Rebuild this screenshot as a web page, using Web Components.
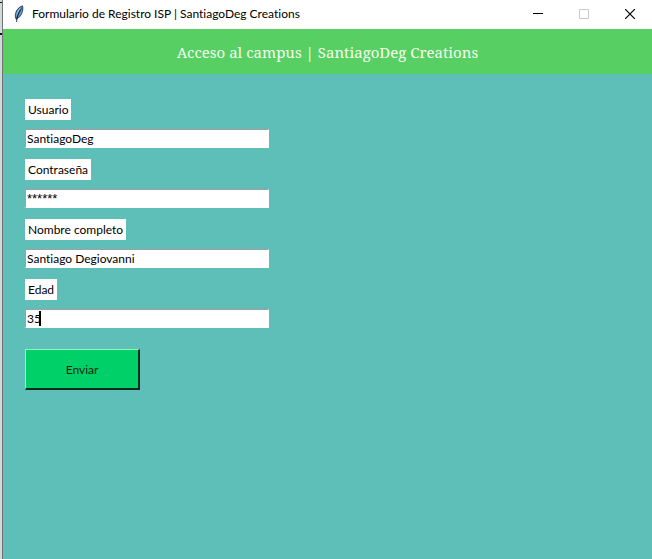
<!DOCTYPE html>
<html lang="es">
<head>
<meta charset="utf-8">
<meta name="viewport" content="width=device-width, initial-scale=1">
<title>Formulario de Registro ISP | SantiagoDeg Creations</title>
<style>
html,body{margin:0;height:100%}
body{font:12px/17px Lato,"Noto Sans",sans-serif;font-variant-ligatures:none;color:#000;overflow:hidden}
</style>
</head>
<body>
<app-window>
  <title-bar slot="title">Formulario de Registro ISP | SantiagoDeg Creations</title-bar>
  <page-banner>Acceso al campus | SantiagoDeg Creations</page-banner>
  <entry-form>
    <form-field label="Usuario" value="SantiagoDeg"></form-field>
    <form-field label="Contraseña" value="******" masked></form-field>
    <form-field label="Nombre completo" value="Santiago Degiovanni"></form-field>
    <form-field label="Edad" value="35" caret></form-field>
    <submit-button slot="action">Enviar</submit-button>
  </entry-form>
</app-window>
<script>
function define(name, html, setup) {
  const template = document.createElement('template');
  template.innerHTML = html;
  customElements.define(name, class extends HTMLElement {
    constructor() {
      super();
      this.attachShadow({mode: 'open'}).append(template.content.cloneNode(true));
    }
    connectedCallback() { if (setup) setup(this, this.shadowRoot); }
  });
}

define('app-window', `<style>
:host{display:flex;min-height:100vh;background:#5ebfb9}
.edge{flex:none;box-sizing:border-box;width:3px;border-right:1px solid #6b7776;
  background:linear-gradient(#111,#111) 0 2px/2px 1px no-repeat,linear-gradient(#111,#111) 0 33px/2px 2px no-repeat,#d5d8d8}
main{flex:1;min-width:0;display:flex;flex-direction:column}
</style><div class="edge"></div><main><slot name="title"></slot><slot></slot></main>`);

define('title-bar', `<style>
:host{display:flex;align-items:center;height:29px;background:#fff;white-space:nowrap}
.feather{flex:none;width:14px;height:18px;margin:0 6px 2px 9px}
.text{flex:1;min-width:0;overflow:hidden;padding-bottom:2px}
button{flex:none;display:grid;place-items:center;width:46px;height:27px;margin:0;padding:0;border:0;background:none}
button svg{display:block}
.controls{display:flex;align-items:center;margin:0 -1px 2px 0}
</style>
<svg class="feather" viewBox="0 0 14 18" aria-hidden="true">
<path d="M10.5 .8C7.5 1.5 4.2 5 3.5 8.4c-.5 2.2-.3 4.3.8 6.1 2.8-1.7 5.2-4.4 6-7.4.7-2.3.8-4.5.2-6.3z" fill="#3f6f9b" stroke="#0c1722" stroke-width=".6"/>
<path d="M9.7 1.8C7.3 3 5 6 4.5 8.2c-.3 1.3-.3 2.8 0 3.8C5.8 8 7.6 5 9.7 1.8z" fill="#8fbdea"/>
<path d="M10 4C8.6 6.5 7 8.8 6 12 8 10.3 9.5 8.5 9.9 6.5z" fill="#6d9ecb"/>
<path d="M9 4.300C6.600 7.600 4.900 11.500 4.600 17" fill="none" stroke="#0b1016" stroke-width=".8"/>
</svg>
<span class="text"><slot></slot></span>
<div class="controls">
<button type="button" aria-label="Minimizar"><svg width="10" height="10"><path d="M0 4.500h10" stroke="#000"/></svg></button>
<button type="button" aria-label="Maximizar" disabled><svg width="10" height="10"><path d="M.5.5h9v9h-9z" fill="none" stroke="#c8c8c8"/></svg></button>
<button type="button" aria-label="Cerrar"><svg width="10" height="10"><path d="M0 0l10 10M10 0L0 10" stroke="#000" stroke-width="1.200"/></svg></button>
</div>`);

define('page-banner', `<style>
:host{display:block;background:#57cf63}
h1{margin:0;padding:12px 0 10px;text-align:center;color:#f4fff0;font:400 15px/23px "Noto Serif","Liberation Serif",serif}
</style><h1><slot></slot></h1>`);

define('entry-form', `<style>
:host{display:block;padding:25px 22px}
form{display:flex;flex-direction:column;align-items:flex-start;gap:21px}
.fields{display:flex;flex-direction:column;gap:11px;width:244px;max-width:100%}
</style><form><div class="fields"><slot></slot></div><slot name="action"></slot></form>`);

define('form-field', `<style>
:host{display:flex;flex-direction:column;align-items:flex-start;gap:9px}
label{background:#fff;padding:2px 3px}
.box{position:relative;width:100%}
input{display:block;box-sizing:border-box;width:100%;height:19px;margin:0;padding:0 1px;border:1px solid;
 border-color:#a0a0a0 #fff #fff #a0a0a0;border-radius:0;background:#fff;color:#000;font:inherit;outline:0}
:host([masked]) input{font:13px/17px "Liberation Sans",sans-serif}
.caret{position:absolute;top:2px;bottom:2px;left:calc(var(--chars) * 1ch);width:2px;background:#000}
</style><label for="entry"></label><div class="box"><input id="entry" type="text" autocomplete="off"></div>`,
(host, root) => {
  const value = host.getAttribute('value');
  root.querySelector('label').textContent = host.getAttribute('label');
  root.querySelector('input').value = value;
  if (host.hasAttribute('caret') && !root.querySelector('.caret')) {
    const caret = document.createElement('span');
    caret.className = 'caret';
    caret.style.setProperty('--chars', value.length);
    root.querySelector('.box').append(caret);
  }
});

define('submit-button', `<style>
:host{display:block}
button{box-sizing:border-box;width:115px;height:41px;margin:0;padding:0;border:solid;border-width:1px 2px 2px 1px;
 border-color:#8ff5bd #062b18 #062b18 #8ff5bd;border-radius:0;background:#00d068;color:#04250f;font:inherit}
</style><button type="button"><slot></slot></button>`);
</script>
</body>
</html>
